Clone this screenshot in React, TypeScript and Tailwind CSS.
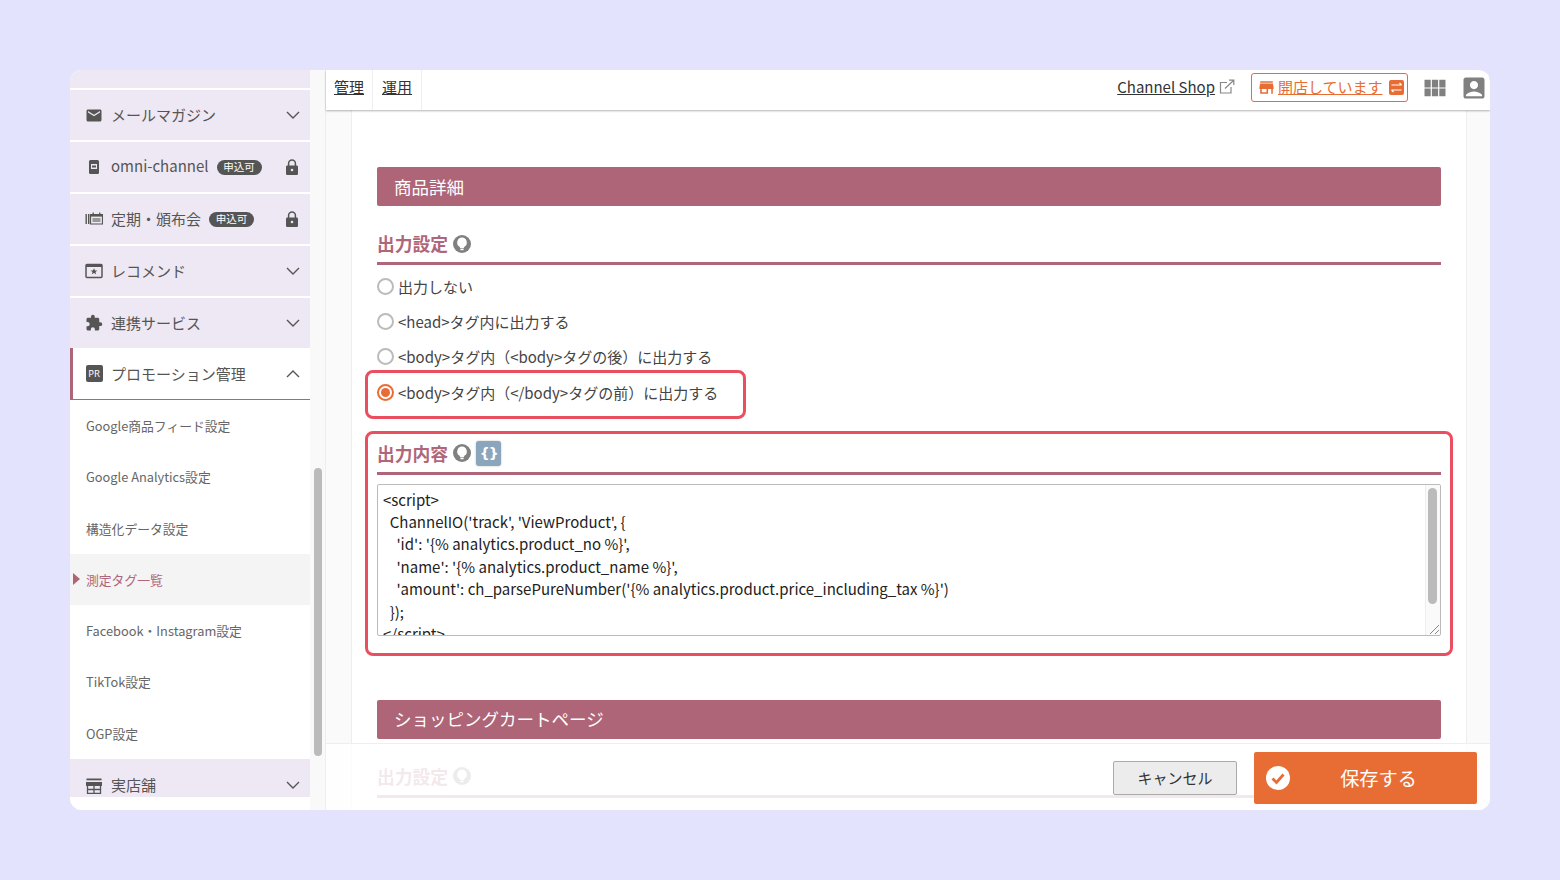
import { MdEmail, MdExtension, MdStore, MdViewModule, MdAccountBox } from 'react-icons/md'

const FONT = "font-['Noto_Sans_CJK_JP','Noto_Sans',sans-serif]"

function Chevron({ up }: { up?: boolean }) {
  return (
    <svg width="14" height="8" viewBox="0 0 14 8" fill="none" stroke="#555" strokeWidth="1.4">
      <path d={up ? 'M1 7l6-6 6 6' : 'M1 1l6 6 6-6'} />
    </svg>
  )
}

function LockIcon() {
  return (
    <svg width="12" height="16" viewBox="0 0 12 16" className="mr-[3px]">
      <path d="M2.6 7V4.4a3.4 3.4 0 0 1 6.8 0V7" fill="none" stroke="#555" strokeWidth="1.5" />
      <rect y="6.5" width="12" height="9.5" rx="1.2" fill="#555" />
      <circle cx="6" cy="11" r="1.3" fill="#ede8f3" />
    </svg>
  )
}

function Bulb() {
  return (
    <svg width="18" height="18" viewBox="0 0 18 18">
      <circle cx="9" cy="9" r="9" fill="#808080" />
      <path d="M9 2.6a4.9 4.9 0 0 0-2.6 9l.8 1.4h3.6l.8-1.4A4.9 4.9 0 0 0 9 2.6z" fill="#fff" />
      <rect x="7.4" y="13.6" width="3.2" height="1.6" fill="#fff" />
    </svg>
  )
}

function PhoneIcon() {
  return (
    <svg width="18" height="18" viewBox="0 0 18 18">
      <rect x="4" y="2" width="10" height="14" rx="1.5" fill="#555" />
      <rect x="6" y="6" width="6" height="5" fill="#ede8f3" />
      <rect x="7" y="7.5" width="4" height="2" fill="#555" />
    </svg>
  )
}

function CalendarIcon() {
  return (
    <svg width="18" height="18" viewBox="0 0 18 18">
      <rect x="0.5" y="4" width="1.4" height="10" fill="#555" />
      <rect x="3" y="4" width="1.4" height="10" fill="#555" />
      <path d="M5.5 4.5h12V14h-12z" fill="none" stroke="#555" strokeWidth="1.2" />
      <rect x="5.5" y="4" width="12" height="2.6" fill="#555" />
      <rect x="7.5" y="2.6" width="1.4" height="2" fill="#555" />
      <rect x="14" y="2.6" width="1.4" height="2" fill="#555" />
      <rect x="7.5" y="8" width="8" height="4" fill="#999" />
    </svg>
  )
}

function StarBoxIcon() {
  return (
    <svg width="18" height="18" viewBox="0 0 18 18">
      <rect x="1" y="2.5" width="16" height="13" rx="1" fill="none" stroke="#555" strokeWidth="1.5" />
      <rect x="1" y="2.5" width="16" height="2.5" fill="#555" />
      <path d="M9 6.2l1 2.2h2.4l-1.9 1.5.7 2.4L9 11l-2.2 1.3.7-2.4-1.9-1.5H8z" fill="#555" />
    </svg>
  )
}

function PrIcon() {
  return (
    <div className="flex h-[17px] w-[17px] items-center justify-center rounded-[2px] bg-[#555] font-['Noto_Sans'] text-[9.5px] leading-none text-white">
      PR
    </div>
  )
}

function ShopLineIcon() {
  return (
    <svg width="18" height="18" viewBox="0 0 18 18" className="mt-[2px]">
      <rect x="1.5" y="1.5" width="15" height="1.8" fill="#555" />
      <rect x="1" y="5" width="16" height="4" fill="#555" />
      <path d="M2.5 9v8M15.5 9v8M9 9v8M2.5 12.5h13M2.5 16.4h13" stroke="#555" strokeWidth="1.3" fill="none" />
    </svg>
  )
}

function Badge() {
  return (
    <span className="ml-2 mt-[1px] flex h-[15px] w-[45px] items-center justify-center rounded-full bg-[#555] text-[10.5px] leading-none text-white">
      申込可
    </span>
  )
}

function MenuItem({ icon, label, badge, last }: { icon: React.ReactNode; label: string; badge?: boolean; last?: boolean }) {
  return (
    <div className={`flex items-center bg-[#ede8f3] pl-[15px] pr-[8px] text-[15px] text-[#555] ${last ? 'h-[38.25px] overflow-hidden pt-[15px]' : 'mb-[2px] h-[50px]'}`}>
      <span className="flex w-[18px] shrink-0 justify-center">{icon}</span>
      <span className={`ml-2 leading-none ${label === 'omni-channel' ? '-mt-[4px]' : '-mt-[2px]'}`}>{label}</span>
      {badge && <Badge />}
      <span className="ml-auto flex w-[18px] justify-center">
        {badge ? <LockIcon /> : <Chevron />}
      </span>
    </div>
  )
}

const subItems = ['Google商品フィード設定', 'Google Analytics設定', '構造化データ設定', '測定タグ一覧', 'Facebook・Instagram設定', 'TikTok設定', 'OGP設定']

function Sidebar() {
  return (
    <div className="flex w-[240px] shrink-0 flex-col bg-white">
      <div className="mb-[2px] h-[18px] bg-[#ede8f3]" />
      <MenuItem icon={<MdEmail size={21} color="#555" />} label="メールマガジン" />
      <MenuItem icon={<PhoneIcon />} label="omni-channel" badge />
      <MenuItem icon={<CalendarIcon />} label="定期・頒布会" badge />
      <MenuItem icon={<StarBoxIcon />} label="レコメンド" />
      <div className="-mb-[2px]">
        <MenuItem icon={<MdExtension size={20} color="#555" />} label="連携サービス" />
      </div>
      <div className="flex h-[52px] items-center border-b border-[#ae6577] border-l-[3px] border-l-[#ae6577] bg-white pl-[12px] pr-[8px] text-[15px] text-[#555]">
        <span className="flex w-[18px] justify-center"><PrIcon /></span>
        <span className="ml-2 leading-none">プロモーション管理</span>
        <span className="ml-auto flex w-[18px] justify-center"><Chevron up /></span>
      </div>
      {subItems.map((item, i) => (
        <div
          key={item}
          className={`relative flex h-[51.25px] items-center pl-[16px] text-[12.8px] ${i === 3 ? 'bg-[#f4f4f4] text-[#b0667a]' : 'text-[#666]'}`}
        >
          {i === 3 && <span className="absolute left-[3px] h-0 w-0 border-y-[6px] border-l-[7px] border-y-transparent border-l-[#ae6577]" />}
          {item}
        </div>
      ))}
      <MenuItem icon={<ShopLineIcon />} label="実店舗" last />
    </div>
  )
}

function TopBar() {
  return (
    <div className="relative z-10 flex h-[40px] shrink-0 items-stretch bg-white pr-[2px] shadow-[0_1px_2px_rgba(0,0,0,0.3)]">
      <div className="flex items-center border-r border-[#eee] px-[8px] pb-[5px] text-[15px] text-[#333] underline">管理</div>
      <div className="flex items-center border-r border-[#eee] px-[9px] pb-[5px] text-[15px] text-[#333] underline">運用</div>
      <div className="ml-auto flex items-center pb-[5px] text-[15px] text-[#333]">
        <span className="underline">Channel Shop</span>
        <svg width="16" height="16" viewBox="0 0 16 16" className="mb-[2px] ml-[4px]" fill="none" stroke="#888" strokeWidth="1.2">
          <path d="M8 3.5H1.5V14h10.5V8" />
          <path d="M6 9.5L14.5 1.5M10 1.2h4.8V6" />
        </svg>
        <div className="ml-[16px] flex h-[29px] w-[157px] items-center rounded-[3px] border border-[#e86d35] pl-[5px] text-[#e86d35]">
          <MdStore size={19} color="#e86d35" />
          <span className="ml-[2px] underline">開店しています</span>
          <svg width="15" height="15" viewBox="0 0 15 15" className="ml-[6px]">
            <rect width="15" height="15" rx="2" fill="#e86d35" />
            <path d="M2.5 5h10M10.5 3l2 2M12.5 10h-10M4.5 12l-2-2" stroke="#fff" strokeWidth="1.2" fill="none" />
          </svg>
        </div>
        <MdViewModule size={28} color="#808080" className="ml-[13px]" />
        <MdAccountBox size={28} color="#808080" className="ml-[11px]" />
      </div>
    </div>
  )
}

function SectionBar({ title }: { title: string }) {
  return (
    <div className="flex h-[39px] items-center rounded-[2px] bg-[#ae6577] pl-[17px] pt-[1px] text-[17.5px] text-white">{title}</div>
  )
}

function SubHeading({ title, code }: { title: string; code?: boolean }) {
  return (
    <div className="flex h-[40px] items-center gap-[5px] border-b-[3px] border-[#b0667a] text-[17.8px] font-bold text-[#b0667a]">
      {title}
      <Bulb />
      {code && (
        <span className="flex h-[25px] w-[25px] items-center justify-center rounded-[3px] bg-[#8ba5bc] font-['DejaVu_Sans'] text-[14px] font-bold tracking-[-1px] text-white shadow-[0_0_2px_rgba(0,0,0,0.3)]">
          {'{}'}
        </span>
      )}
    </div>
  )
}

function Radio({ label, checked }: { label: string; checked?: boolean }) {
  return (
    <div className="flex items-center gap-[4px] text-[15px] text-[#444]">
      <span className={`flex h-[17px] w-[17px] shrink-0 items-center justify-center rounded-full border-2 ${checked ? 'border-[#e86d35]' : 'border-[#bbb]'}`}>
        {checked && <span className="h-[9px] w-[9px] rounded-full bg-[#e86d35]" />}
      </span>
      <span className="leading-none">{label}</span>
    </div>
  )
}

const codeLines = [
  '<script>',
  "  ChannelIO('track', 'ViewProduct', {",
  "    'id': '{% analytics.product_no %}',",
  "    'name': '{% analytics.product_name %}',",
  "    'amount': ch_parsePureNumber('{% analytics.product.price_including_tax %}')",
  '  });',
  '</script>',
]

function CodeBox() {
  return (
    <div className="relative mt-[9px] h-[152px] overflow-hidden rounded-[2px] border border-[#bbb] bg-white pl-[5px] pt-[4px] text-[15px] leading-[22.4px] text-[#222]">
      {codeLines.map((line) => (
        <div key={line} className="whitespace-pre">{line}</div>
      ))}
      <div className="absolute inset-y-0 right-0 w-[15px] border-l border-[#eee] bg-[#fafafa]">
        <div className="ml-[2px] mt-[3px] h-[116px] w-[9px] rounded-full bg-[#bbb]" />
      </div>
      <svg width="12" height="12" viewBox="0 0 12 12" className="absolute bottom-0 right-0" stroke="#888" strokeWidth="1">
        <path d="M2 11L11 2M7 11l4-4" />
      </svg>
    </div>
  )
}

function MainPanel() {
  return (
    <div className="relative flex min-w-0 flex-1 flex-col border-l border-[#eee] bg-[#fafafa]">
      <TopBar />
      <div className="ml-[25px] mr-[23px] min-h-0 flex-1 overflow-hidden border-x border-[#eee] bg-white px-[25px] pt-[57px]">
        <SectionBar title="商品詳細" />
        <div className="mt-[19px]"><SubHeading title="出力設定" /></div>
        <div className="mt-[13px] flex flex-col gap-[18px]">
          <Radio label="出力しない" />
          <Radio label="<head>タグ内に出力する" />
          <Radio label="<body>タグ内（<body>タグの後）に出力する" />
        </div>
        <div className="-mx-[12px] mt-[4.6px] flex h-[49px] w-[381px] items-center rounded-[8px] border-[3px] border-[#e94f5f] pb-[4px] pl-[9px]">
          <Radio label="<body>タグ内（</body>タグの前）に出力する" checked />
        </div>
        <div className="-mx-[12px] mt-[12px] h-[225px] rounded-[8px] border-[3px] border-[#e94f5f] px-[9px] pt-[1px]">
          <SubHeading title="出力内容" code />
          <CodeBox />
        </div>
        <div className="mt-[44px]"><SectionBar title="ショッピングカートページ" /></div>
        <div className="mt-[19px]"><SubHeading title="出力設定" /></div>
      </div>
      <div className="absolute inset-x-0 bottom-0 flex h-[67px] items-start justify-end border-t border-[#eee] bg-white/85 pr-[13px] pt-[8px]">
        <button className="mt-[9px] h-[34px] w-[124px] rounded-[2px] border border-[#aaa] bg-[#ececec] text-[15px] text-[#333]">キャンセル</button>
        <button className="relative ml-[17px] h-[52px] w-[223px] rounded-[2px] bg-[#e86d35] text-[19.2px] text-white">
          <svg width="24" height="24" viewBox="0 0 24 24" className="absolute left-[12px] top-[14px]">
            <circle cx="12" cy="12" r="12" fill="#fff" />
            <path d="M6.5 12.5l4 4 7-8" fill="none" stroke="#e86d35" strokeWidth="2.8" />
          </svg>
          <span className="ml-[26px]">保存する</span>
        </button>
      </div>
    </div>
  )
}

export default function App() {
  return (
    <div className={`flex h-[880px] w-[1560px] items-center justify-center bg-[#e3e3fd] ${FONT}`}>
      <div className="flex h-[740px] w-[1420px] overflow-hidden rounded-[12px] bg-white">
        <Sidebar />
        <div className="w-[15px] shrink-0 bg-[#f9f9f9] pl-[4px] pt-[398px]">
          <div className="h-[288px] w-[8px] rounded-full bg-[#bbb]" />
        </div>
        <MainPanel />
      </div>
    </div>
  )
}
